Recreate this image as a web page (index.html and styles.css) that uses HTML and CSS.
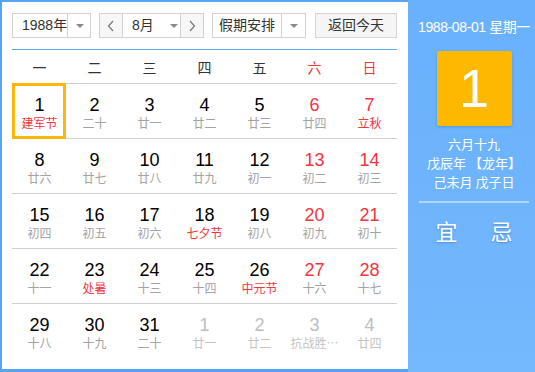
FILE: index.html
```html
<!DOCTYPE html>
<html lang="zh">
<head>
<meta charset="utf-8">
<title>万年历</title>
<link rel="stylesheet" href="styles.css">
</head>
<body>
<div class="cal">
  <div class="main">
    <div class="toolbar">
      <div class="sel year"><span class="val">1988年</span><span class="arr"><i class="tri"></i></span></div>
      <div class="sel month">
        <span class="nav"><svg width="8" height="12" viewBox="0 0 8 12"><polyline points="6,1 1.5,6 6,11" fill="none" stroke="#777" stroke-width="1.2"/></svg></span>
        <span class="val">8月</span><span class="marr"><i class="tri"></i></span>
        <span class="nav next"><svg width="8" height="12" viewBox="0 0 8 12"><polyline points="2,1 6.5,6 2,11" fill="none" stroke="#777" stroke-width="1.2"/></svg></span>
      </div>
      <div class="sel holiday"><span class="val">假期安排</span><span class="arr"><i class="tri"></i></span></div>
      <div class="today">返回今天</div>
    </div>
    <div class="weekdays">
      <span>一</span><span>二</span><span>三</span><span>四</span><span>五</span><span class="red">六</span><span class="red">日</span>
    </div>
    <div class="row">
      <div class="day selected"><b>1</b><em class="fest">建军节</em></div>
      <div class="day"><b>2</b><em>二十</em></div>
      <div class="day"><b>3</b><em>廿一</em></div>
      <div class="day"><b>4</b><em>廿二</em></div>
      <div class="day"><b>5</b><em>廿三</em></div>
      <div class="day we"><b>6</b><em>廿四</em></div>
      <div class="day we"><b>7</b><em class="fest">立秋</em></div>
    </div>
    <div class="row">
      <div class="day"><b>8</b><em>廿六</em></div>
      <div class="day"><b>9</b><em>廿七</em></div>
      <div class="day"><b>10</b><em>廿八</em></div>
      <div class="day"><b>11</b><em>廿九</em></div>
      <div class="day"><b>12</b><em>初一</em></div>
      <div class="day we"><b>13</b><em>初二</em></div>
      <div class="day we"><b>14</b><em>初三</em></div>
    </div>
    <div class="row">
      <div class="day"><b>15</b><em>初四</em></div>
      <div class="day"><b>16</b><em>初五</em></div>
      <div class="day"><b>17</b><em>初六</em></div>
      <div class="day"><b>18</b><em class="fest">七夕节</em></div>
      <div class="day"><b>19</b><em>初八</em></div>
      <div class="day we"><b>20</b><em>初九</em></div>
      <div class="day we"><b>21</b><em>初十</em></div>
    </div>
    <div class="row">
      <div class="day"><b>22</b><em>十一</em></div>
      <div class="day"><b>23</b><em class="fest">处暑</em></div>
      <div class="day"><b>24</b><em>十三</em></div>
      <div class="day"><b>25</b><em>十四</em></div>
      <div class="day"><b>26</b><em class="fest">中元节</em></div>
      <div class="day we"><b>27</b><em>十六</em></div>
      <div class="day we"><b>28</b><em>十七</em></div>
    </div>
    <div class="row">
      <div class="day"><b>29</b><em>十八</em></div>
      <div class="day"><b>30</b><em>十九</em></div>
      <div class="day"><b>31</b><em>二十</em></div>
      <div class="day other"><b>1</b><em>廿一</em></div>
      <div class="day other"><b>2</b><em>廿二</em></div>
      <div class="day other"><b>3</b><em>抗战胜…</em></div>
      <div class="day other"><b>4</b><em>廿四</em></div>
    </div>
  </div>
  <div class="side">
    <div class="date">1988-08-01 星期一</div>
    <div class="big">1</div>
    <div class="lunar">
      <div>六月十九</div>
      <div>戊辰年 【龙年】</div>
      <div>己未月 戊子日</div>
    </div>
    <div class="sep"></div>
    <div class="yiji"><span>宜</span><span>忌</span></div>
  </div>
</div>
</body>
</html>
```

FILE: styles.css
```css
html, body {
  margin: 0;
  padding: 0;
  background: #fff;
}
body {
  font-family: "Liberation Sans", "Noto Sans CJK SC", sans-serif;
  color: #333;
}
.cal {
  display: flex;
  width: 535px;
  height: 372px;
  background: #55a5f6;
  overflow: hidden;
}
.main {
  box-sizing: border-box;
  width: 406px;
  height: 367px;
  margin: 2px 0 0 2px;
  background: #fff;
  padding: 11px 0 0 10px;
}
.toolbar {
  display: flex;
  height: 25px;
  font-size: 14px;
  line-height: 23px;
  white-space: nowrap;
}
.sel {
  box-sizing: border-box;
  display: flex;
  height: 25px;
  border: 1px solid #d2d2d2;
  background: #fff;
}
.sel .val {
  flex: 1;
  text-align: center;
  color: #333;
  white-space: nowrap;
}
.sel .arr {
  flex: none;
  box-sizing: border-box;
  width: 24px;
  border-left: 1px solid #d2d2d2;
  display: flex;
  align-items: center;
  justify-content: center;
}
.tri {
  display: block;
  width: 0;
  height: 0;
  border-left: 4px solid transparent;
  border-right: 4px solid transparent;
  border-top: 4px solid #8a8a8a;
}
.year {
  width: 79px;
}
.year .val {
  text-align: left;
  padding-left: 9px;
}
.month {
  width: 105px;
  margin-left: 8px;
}
.month .nav {
  flex: none;
  width: 22px;
  display: flex;
  align-items: center;
  justify-content: center;
  background: #f7f7f7;
}
.month .next {
  border-left: 1px solid #d2d2d2;
}
.month .nav:first-child {
  border-right: 1px solid #d2d2d2;
}
.month .val {
  flex: none;
  width: 35px;
  padding-left: 9px;
  text-align: left;
}
.month .marr {
  flex: 1;
  display: flex;
  align-items: center;
  justify-content: center;
}
.holiday {
  width: 94px;
  margin-left: 8px;
}
.today {
  box-sizing: border-box;
  width: 82px;
  height: 25px;
  margin-left: 9px;
  border: 1px solid #d6d6d6;
  background: #f5f5f5;
  text-align: center;
  color: #333;
}
.weekdays {
  display: flex;
  width: 385px;
  margin-top: 11px;
  border-top: 1px solid #5ea8f6;
  height: 33px;
  font-size: 14px;
  line-height: 35px;
  font-family: "Noto Sans CJK SC", sans-serif;
}
.weekdays span {
  width: 55px;
  text-align: center;
}
.red {
  color: #f2343e;
}
.row {
  display: flex;
  width: 385px;
  height: 54px;
  border-top: 1px solid #d0d0d0;
}
.day {
  position: relative;
  width: 55px;
  padding-top: 11px;
  text-align: center;
  box-sizing: border-box;
}
.day b {
  display: block;
  font-weight: normal;
  font-size: 18px;
  line-height: 20px;
  color: #000;
}
.day em {
  display: block;
  font-style: normal;
  font-size: 12px;
  line-height: 16px;
  color: #a3a3a3;
  font-family: "Noto Sans CJK SC", sans-serif;
  white-space: nowrap;
}
.day.we b {
  color: #f2343e;
}
.day em.fest {
  color: #f2343e;
}
.day.other b {
  color: #bdbdbd;
}
.day.other em {
  color: #c4c4c4;
}
.day.selected::after {
  content: "";
  position: absolute;
  left: 0;
  top: -1px;
  width: 54px;
  height: 56px;
  box-sizing: border-box;
  border: 3px solid #ffb60a;
}
.side {
  flex: 1;
  box-sizing: border-box;
  padding: 18px 0 0 5px;
  background: linear-gradient(#69b1fc, #74b8fd);
  color: #fff;
  display: flex;
  flex-direction: column;
  align-items: center;
}
.date {
  font-size: 14px;
  line-height: 18px;
  white-space: nowrap;
  letter-spacing: -0.4px;
}
.big {
  width: 75px;
  height: 75px;
  margin-top: 15px;
  background: #ffb800;
  border-radius: 2px;
  box-shadow: 0 1px 3px rgba(40, 90, 160, 0.35);
  font-size: 54px;
  line-height: 75px;
  text-align: center;
  color: #fff;
}
.lunar {
  margin-top: 8px;
  font-size: 13px;
  line-height: 19px;
  text-align: center;
  font-family: "Noto Sans CJK SC", sans-serif;
}
.sep {
  width: 110px;
  height: 2px;
  margin-top: 10px;
  background: rgba(255, 255, 255, 0.45);
}
.yiji {
  display: flex;
  gap: 33px;
  margin-top: 13px;
  font-size: 22px;
  line-height: 28px;
  font-family: "Noto Sans CJK SC", sans-serif;
  text-shadow: 0 1px 2px rgba(30, 80, 150, 0.4);
}
```
